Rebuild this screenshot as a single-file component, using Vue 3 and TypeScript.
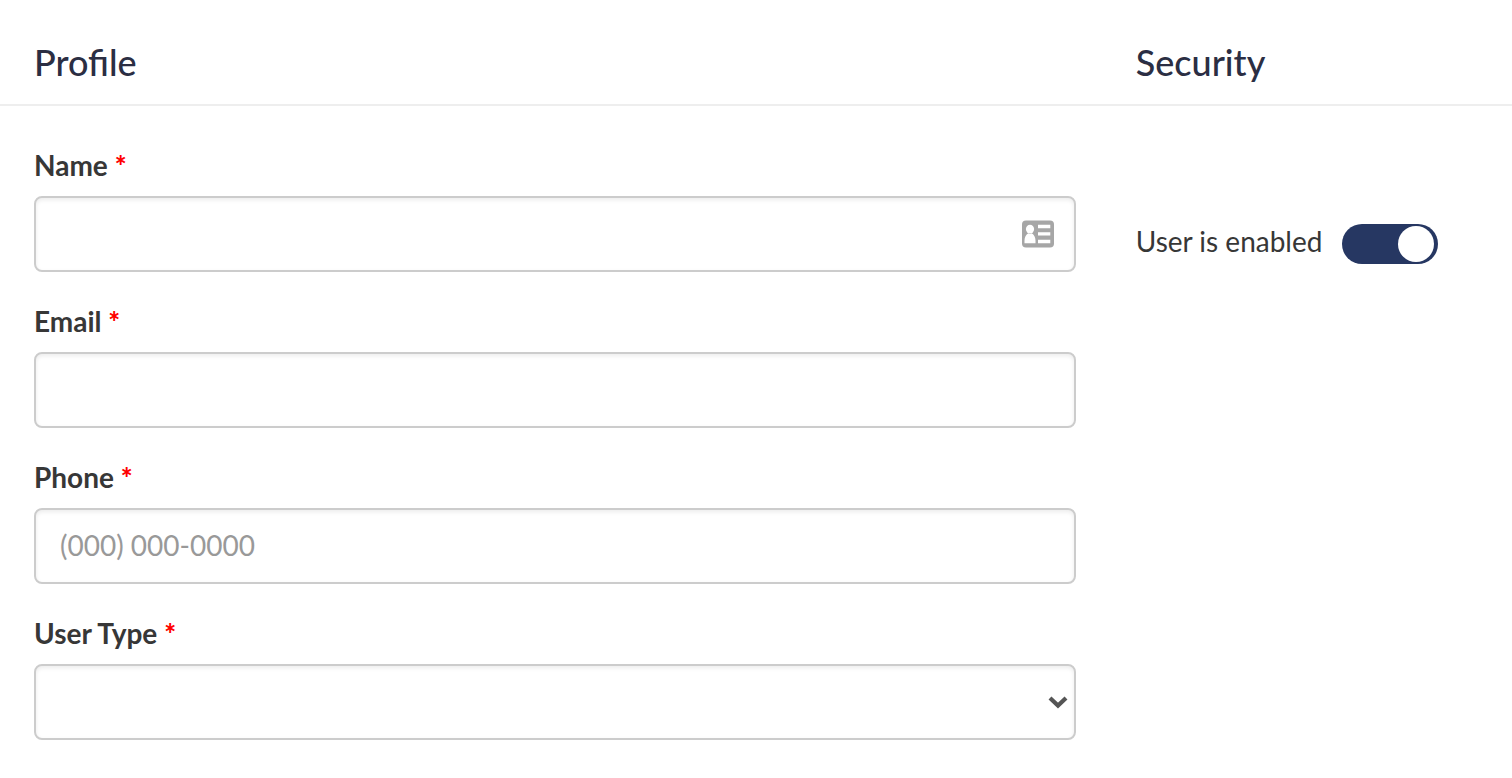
<script setup lang="ts">
import { ref } from 'vue'

const name = ref('')
const email = ref('')
const phone = ref('')
const userType = ref('')
const enabled = ref(true)
</script>

<template>
  <form class="user-form" @submit.prevent>
    <header class="columns headings">
      <h2>Profile</h2>
      <h2>Security</h2>
    </header>

    <div class="columns content">
      <section class="fields" aria-label="Profile">
        <div class="field">
          <label for="name">Name <span class="required">*</span></label>
          <div class="control">
            <input id="name" v-model="name" class="box with-icon" type="text" required />
            <svg class="card-icon" width="32" height="28" viewBox="0 0 32 28" aria-hidden="true">
              <rect y="0.4" width="32" height="27.2" rx="4" fill="#a6a6a6" />
              <ellipse cx="8" cy="9.1" rx="4.1" ry="4.4" fill="#fff" />
              <path d="M2.5 23.2v-2.6c0-3.4 1.4-6 3.8-7.4q1.7 1 3.4 0c2.4 1.4 3.8 4 3.8 7.4v2.6z" fill="#fff" />
              <path d="M16 4.8h12.3v3.4H16zM16 12.2h12.3v3.4H16zM16 19.8h12.3v3.4H16z" fill="#fff" />
            </svg>
          </div>
        </div>

        <div class="field">
          <label for="email">Email <span class="required">*</span></label>
          <input id="email" v-model="email" class="box" type="email" required />
        </div>

        <div class="field">
          <label for="phone">Phone <span class="required">*</span></label>
          <input id="phone" v-model="phone" class="box" type="tel" placeholder="(000) 000-0000" required />
        </div>

        <div class="field">
          <label for="user-type">User Type <span class="required">*</span></label>
          <div class="control">
            <select id="user-type" v-model="userType" class="box" required>
              <option value=""></option>
            </select>
            <svg class="chevron" width="20" height="14" viewBox="0 0 20 14" aria-hidden="true">
              <path d="M2 2 10 9.6 18 2" fill="none" stroke="#555" stroke-width="4.2" />
            </svg>
          </div>
        </div>
      </section>

      <section class="security" aria-label="Security">
        <label for="enabled">User is enabled</label>
        <input id="enabled" v-model="enabled" class="switch" type="checkbox" role="switch" />
      </section>
    </div>
  </form>
</template>

<style>
body {
  background: #fff;
}
</style>

<style scoped>
.user-form {
  font-family: Lato, "Open Sans", sans-serif;
  font-size: 28px;
  line-height: 38px;
  color: #373737;
}

.columns {
  display: grid;
  grid-template-columns: 3fr 1fr;
  column-gap: 60px;
  padding: 0 29px 0 34px;
}

.headings {
  padding-top: 38px;
  padding-bottom: 18px;
  border-bottom: 2px solid #eee;
}

h2 {
  margin: 0;
  font-size: 36px;
  font-weight: 500;
  line-height: 48px;
  color: #2b2e43;
}

.content {
  padding-top: 40px;
  padding-bottom: 38px;
}

.fields {
  display: flex;
  flex-direction: column;
  gap: 30px;
}

.field {
  display: flex;
  flex-direction: column;
  gap: 12px;
}

.field label {
  font-weight: 700;
}

.required {
  color: #f00;
  font-weight: 900;
}

.control {
  position: relative;
  display: flex;
}

.box {
  box-sizing: border-box;
  width: 100%;
  height: 76px;
  margin: 0;
  padding: 0 24px 2px;
  border: 2px solid #ccc;
  border-radius: 8px;
  background: #fff;
  box-shadow: inset 0 2px 4px rgba(0, 0, 0, 0.08);
  color: #373737;
  font: inherit;
  appearance: none;
}

.box::placeholder {
  color: #999;
  opacity: 1;
}

.with-icon {
  padding-right: 64px;
}

.card-icon,
.chevron {
  position: absolute;
  pointer-events: none;
}

.card-icon {
  top: 24px;
  right: 22px;
}

.chevron {
  top: 32px;
  right: 8px;
}

.security {
  display: flex;
  align-items: flex-end;
  align-self: start;
  gap: 20px;
  padding-top: 76px;
  white-space: nowrap;
}

.security label {
  padding-bottom: 4px;
}

.switch {
  display: flex;
  flex: none;
  justify-content: flex-end;
  box-sizing: border-box;
  width: 96px;
  height: 40px;
  margin: 0;
  padding: 2px 4px;
  border-radius: 20px;
  background: #263762;
  appearance: none;
  cursor: pointer;
}

.switch::before {
  content: "";
  width: 36px;
  height: 36px;
  border-radius: 50%;
  background: #fff;
}

.switch:not(:checked) {
  justify-content: flex-start;
  background: #ccc;
}
</style>
